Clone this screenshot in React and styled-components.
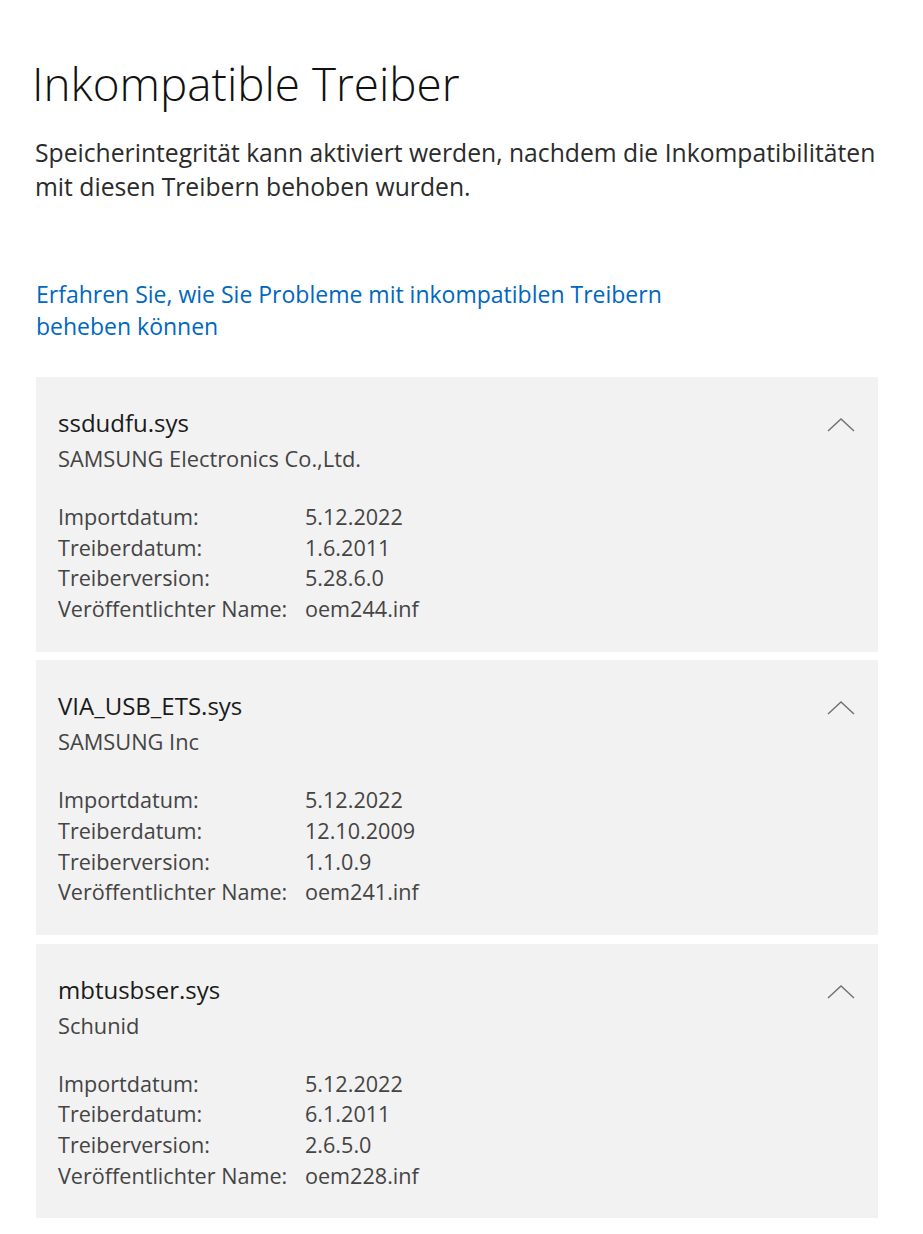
import React from "react";
import styled, { createGlobalStyle } from "styled-components";

const Global = createGlobalStyle`
  html, body { margin: 0; padding: 0; background: #ffffff; }
  body { font-family: "Open Sans", "Noto Sans", sans-serif; }
`;

const Page = styled.div`
  padding: 53px 45px 40px 32px;
  display: flex;
  flex-direction: column;
`;

const Title = styled.h1`
  margin: 0;
  font-size: 45.8px;
  font-weight: 300;
  line-height: 60px;
  color: #111;
`;

const Intro = styled.p`
  margin: 23px 0 0 3px;
  font-size: 24.7px;
  line-height: 34px;
  color: #2b2b2b;
  max-width: 870px;
`;

const Link = styled.a`
  display: block;
  margin: 74px 0 0 4px;
  font-size: 23px;
  line-height: 32px;
  color: #0067c0;
  text-decoration: none;
  max-width: 660px;
`;

const List = styled.div`
  margin: 35px 0 0 4px;
  display: flex;
  flex-direction: column;
  gap: 8.5px;
`;

const Card = styled.section`
  background: #f2f2f2;
  padding: 30px 23px 27px 22px;
  display: flex;
  flex-direction: column;
`;

const Header = styled.div`
  display: flex;
  justify-content: space-between;
  align-items: flex-start;
`;

const Name = styled.div`
  font-size: 24px;
  line-height: 32px;
  color: #1a1a1a;
`;

const Vendor = styled.div`
  font-size: 21.8px;
  line-height: 32px;
  margin-top: 4px;
  color: #444;
`;

const Chevron = styled.svg`
  width: 28px;
  height: 16px;
  margin-top: 10px;
  flex: none;
`;

const Rows = styled.dl`
  margin: 27px 0 0 0;
  display: grid;
  grid-template-columns: 247px 1fr;
`;

const Label = styled.dt`
  font-size: 21.6px;
  line-height: 30.7px;
  color: #444;
`;

const Value = styled.dd`
  margin: 0;
  font-size: 21.6px;
  line-height: 30.7px;
  color: #444;
`;

const drivers = [
  {
    name: "ssdudfu.sys",
    vendor: "SAMSUNG Electronics Co.,Ltd.",
    imp: "5.12.2022",
    date: "1.6.2011",
    ver: "5.28.6.0",
    pub: "oem244.inf",
  },
  {
    name: "VIA_USB_ETS.sys",
    vendor: "SAMSUNG Inc",
    imp: "5.12.2022",
    date: "12.10.2009",
    ver: "1.1.0.9",
    pub: "oem241.inf",
  },
  {
    name: "mbtusbser.sys",
    vendor: "Schunid",
    imp: "5.12.2022",
    date: "6.1.2011",
    ver: "2.6.5.0",
    pub: "oem228.inf",
  },
];

function DriverCard({ d }) {
  return (
    <Card>
      <Header>
        <div>
          <Name>{d.name}</Name>
          <Vendor>{d.vendor}</Vendor>
        </div>
        <Chevron viewBox="0 0 28 16">
          <path d="M1 14 L14 2 L27 14" fill="none" stroke="#707070" strokeWidth="1.4" />
        </Chevron>
      </Header>
      <Rows>
        <Label>Importdatum:</Label>
        <Value>{d.imp}</Value>
        <Label>Treiberdatum:</Label>
        <Value>{d.date}</Value>
        <Label>Treiberversion:</Label>
        <Value>{d.ver}</Value>
        <Label>Veröffentlichter Name:</Label>
        <Value>{d.pub}</Value>
      </Rows>
    </Card>
  );
}

export default function App() {
  return (
    <>
      <Global />
      <Page>
        <Title>Inkompatible Treiber</Title>
        <Intro>
          Speicherintegrität kann aktiviert werden, nachdem die Inkompatibilitäten mit diesen
          Treibern behoben wurden.
        </Intro>
        <Link href="#">
          Erfahren Sie, wie Sie Probleme mit inkompatiblen Treibern beheben können
        </Link>
        <List>
          {drivers.map((d) => (
            <DriverCard key={d.name} d={d} />
          ))}
        </List>
      </Page>
    </>
  );
}
